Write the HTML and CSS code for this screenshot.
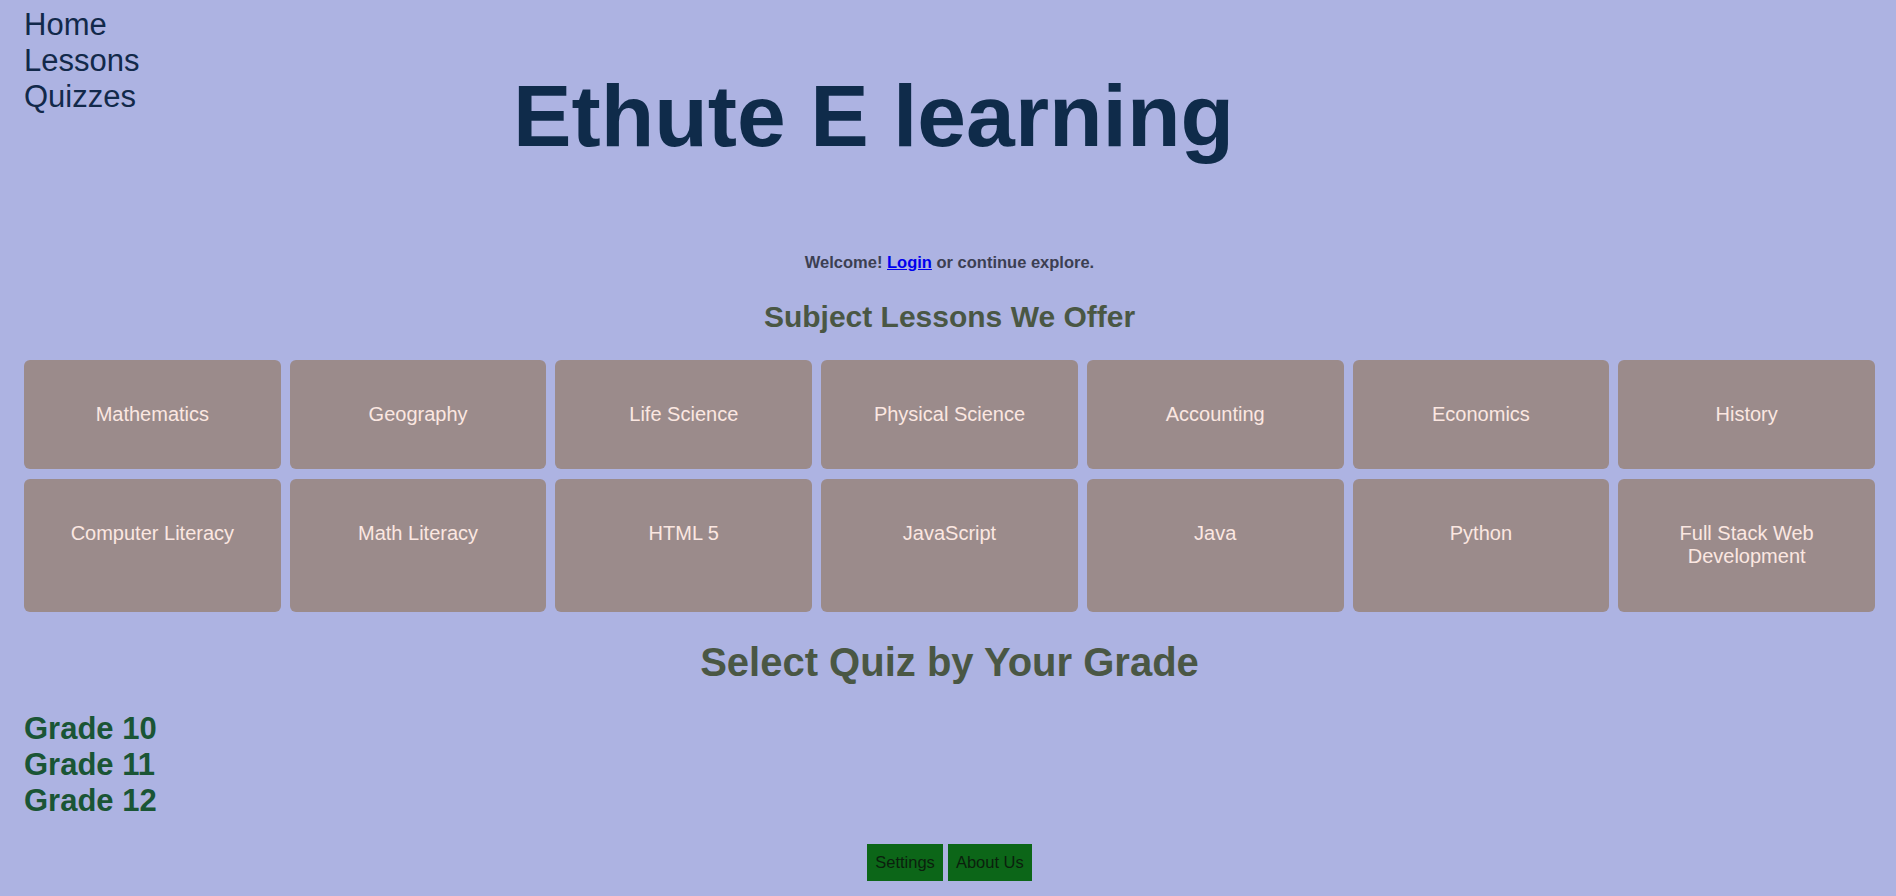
FILE: index.html
```html
<!DOCTYPE html>
<html lang="en">
<head>
<meta charset="utf-8">
<title>Ethute E learning</title>
<link rel="stylesheet" href="styles.css">
</head>
<body>
<div class="page">
  <header class="header">
    <nav class="nav">
      <a class="nav-link" href="#">Home</a>
      <a class="nav-link" href="#">Lessons</a>
      <a class="nav-link" href="#">Quizzes</a>
    </nav>
    <h1 class="title">Ethute E learning</h1>
  </header>

  <p class="welcome">Welcome! <a class="login" href="#">Login</a> or continue explore.</p>

  <h2 class="section-title">Subject Lessons We Offer</h2>

  <div class="subjects">
    <div class="subject">Mathematics</div>
    <div class="subject">Geography</div>
    <div class="subject">Life Science</div>
    <div class="subject">Physical Science</div>
    <div class="subject">Accounting</div>
    <div class="subject">Economics</div>
    <div class="subject">History</div>
    <div class="subject">Computer Literacy</div>
    <div class="subject">Math Literacy</div>
    <div class="subject">HTML 5</div>
    <div class="subject">JavaScript</div>
    <div class="subject">Java</div>
    <div class="subject">Python</div>
    <div class="subject">Full Stack Web Development</div>
  </div>

  <h2 class="quiz-title">Select Quiz by Your Grade</h2>

  <div class="grades">
    <a class="grade" href="#">Grade 10</a>
    <a class="grade" href="#">Grade 11</a>
    <a class="grade" href="#">Grade 12</a>
  </div>

  <div class="actions">
    <button class="btn">Settings</button>
    <button class="btn">About Us</button>
  </div>
</div>
</body>
</html>
```

FILE: styles.css
```css
html, body {
  margin: 0;
  padding: 0;
  background: #adb3e2;
}

body {
  font-family: "Liberation Sans", Arial, sans-serif;
}

.page {
  padding: 7px 21px 20px 24px;
}

.header {
  display: flex;
  align-items: flex-start;
}

.nav {
  display: flex;
  flex-direction: column;
  width: 200px;
}

.nav-link {
  font-size: 31px;
  line-height: 36px;
  color: #12294a;
  text-decoration: none;
}

.title {
  margin: 59px 0 86px 289px;
  font-size: 87.7px;
  font-weight: bold;
  color: #0f2b4a;
  line-height: normal;
}

.welcome {
  margin: 0;
  text-align: center;
  font-size: 16.5px;
  font-weight: bold;
  color: #3c3f52;
}

.login {
  color: #0000ee;
  text-decoration: underline;
}

.section-title {
  margin: 28px 0 26px;
  text-align: center;
  font-size: 30px;
  font-weight: bold;
  color: #4a5744;
}

.subjects {
  display: grid;
  grid-template-columns: repeat(7, 1fr);
  gap: 10px 9px;
}

.subject {
  background: #9b8b8b;
  color: #fbe7e1;
  border-radius: 6px;
  padding: 43px 12px;
  font-size: 20px;
  line-height: 23px;
  text-align: center;
}

.subject:nth-child(n+8) {
  padding-bottom: 44px;
}

.quiz-title {
  margin: 27.5px 0 26px;
  text-align: center;
  font-size: 40px;
  font-weight: bold;
  color: #4a5744;
}

.grades {
  display: flex;
  flex-direction: column;
  align-items: flex-start;
}

.grade {
  font-size: 31px;
  line-height: 36px;
  font-weight: bold;
  color: #1a5535;
  text-decoration: none;
}

.actions {
  margin-top: 25px;
  display: flex;
  justify-content: center;
  gap: 5px;
}

.btn {
  font-family: "Liberation Sans", Arial, sans-serif;
  font-size: 16.5px;
  line-height: 19px;
  padding: 9px 8px;
  background: #0c6618;
  color: #0b1f0d;
  border: none;
  border-radius: 0;
}
```
